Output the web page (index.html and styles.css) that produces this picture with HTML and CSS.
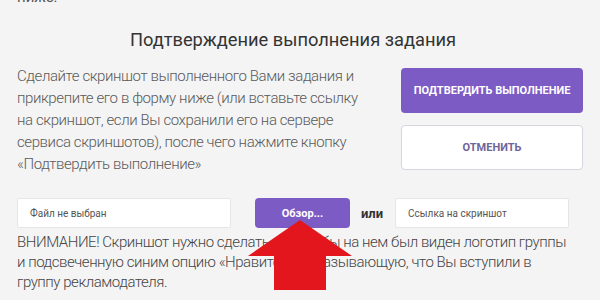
FILE: index.html
```html
<!DOCTYPE html>
<html lang="ru">
<head>
  <meta charset="UTF-8" />
  <title>Подтверждение выполнения задания</title>
  <link rel="stylesheet" href="styles.css">
</head>
<body>
  <div class="page">
    <p class="prev-text">ниже.</p>

    <h2 class="title">Подтверждение выполнения задания</h2>

    <div class="confirm-row">
      <p class="intro">Сделайте скриншот выполненного Вами задания и прикрепите его в форму ниже (или вставьте ссылку на скриншот, если Вы сохранили его на сервере сервиса скриншотов), после чего нажмите кнопку «Подтвердить выполнение»</p>
      <div class="actions">
        <button class="btn btn-primary">Подтвердить выполнение</button>
        <button class="btn btn-outline">Отменить</button>
      </div>
    </div>

    <div class="upload-row">
      <div class="field file-field">Файл не выбран</div>
      <button class="btn btn-browse">Обзор...</button>
      <span class="or">или</span>
      <div class="field link-field">Ссылка на скриншот</div>
    </div>

    <p class="warning">ВНИМАНИЕ! Скриншот нужно сделать так, чтобы на нем был виден логотип группы и подсвеченную синим опцию «Нравится», показывающую, что Вы вступили в группу рекламодателя.</p>

    <!-- red arrow over the screenshot -->
    <svg class="arrow" viewBox="0 0 104 70">
      <path d="M52 0 L104 36 L78 36 L78 70 L26 70 L26 36 L0 36 Z" />
    </svg>
  </div>
</body>
</html>
```

FILE: styles.css
```css
body, html {
  margin: 0;
  height: 100%;
  overflow: hidden;
  background: #f4f4f4;
  font-family: 'Roboto', 'Liberation Sans', sans-serif;
}

.page {
  position: relative;
  width: 566px;
  padding: 0 17px;
}

.prev-text {
  margin: -12px 0 0;
  font-size: 15px;
  line-height: 18px;
  color: #555;
}

.title {
  margin: 23px 0 0;
  padding-right: 14px;
  text-align: center;
  font-size: 18.3px;
  font-weight: 400;
  color: #333;
}

.confirm-row {
  display: flex;
  justify-content: space-between;
  margin-top: 18px;
}

.intro {
  width: 352px;
  margin: -3px 0 0;
  font-size: 15px;
  letter-spacing: -0.4px;
  line-height: 22px;
  color: #5a5a5a;
  font-weight: 300;
}

.actions {
  display: flex;
  flex-direction: column;
  gap: 12px;
  width: 182px;
}

.btn {
  border-radius: 4px;
  font-family: 'Roboto', sans-serif;
  font-weight: 700;
  font-size: 11px;
  text-transform: uppercase;
  cursor: pointer;
  box-sizing: border-box;
}

.btn-primary {
  height: 45px;
  border: none;
  background: #7d5bc4;
  color: #fff;
}

.btn-outline {
  height: 45px;
  border: 1px solid #d8d4e2;
  background: #fff;
  color: #6f6498;
}

.upload-row {
  display: flex;
  align-items: center;
  margin-top: 23px;
}

.field {
  height: 30px;
  box-sizing: border-box;
  padding: 0 12px;
  display: flex;
  align-items: center;
  background: #fff;
  border: 1px solid #e6e6e6;
  border-radius: 2px;
  font-size: 10px;
  color: #555;
}

.file-field {
  width: 214px;
}

.btn-browse {
  width: 95px;
  height: 30px;
  margin-left: 24px;
  border: none;
  background: #7d5bc4;
  color: #fff;
  text-transform: none;
}

.or {
  margin: 0 12px 0 11px;
  font-size: 13px;
  font-weight: 700;
  color: #333;
}

.link-field {
  width: 174px;
}

.warning {
  width: 556px;
  margin: 4px 0 0;
  font-size: 15px;
  letter-spacing: -0.45px;
  line-height: 20px;
  color: #444;
  font-weight: 300;
}

.arrow {
  position: absolute;
  left: 248px;
  top: 232px;
  width: 104px;
  height: 70px;
  fill: #e3161d;
}
```
